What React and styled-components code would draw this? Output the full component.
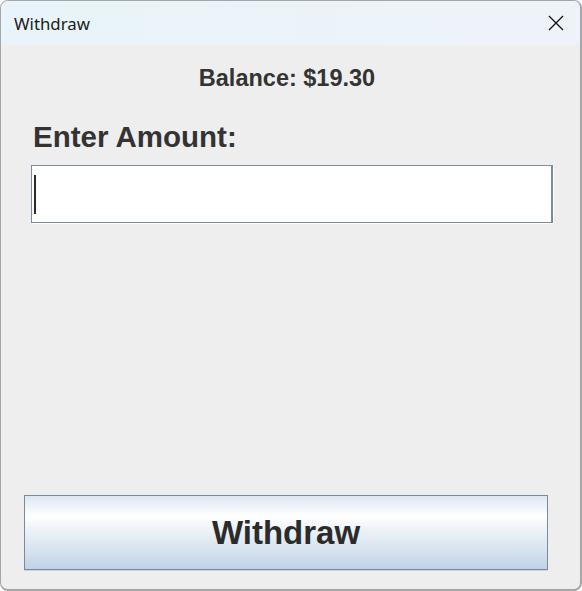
import React from "react";
import styled, { createGlobalStyle } from "styled-components";

const Global = createGlobalStyle`
  html, body {
    margin: 0;
    padding: 0;
    background: #ffffff;
  }
`;

const Window = styled.div`
  box-sizing: border-box;
  width: 582px;
  height: 591px;
  display: flex;
  flex-direction: column;
  border: 1px solid #a6a6a6;
  border-right-width: 2px;
  border-bottom-width: 2px;
  border-radius: 8px;
  overflow: hidden;
  background: #eeeeee;
`;

const TitleBar = styled.div`
  height: 44px;
  flex-shrink: 0;
  display: flex;
  align-items: center;
  justify-content: space-between;
  padding: 0 0 0 13px;
  background: linear-gradient(to right, #e8f4f9, #eef3f9);
  font-family: "Noto Sans", "Open Sans", sans-serif;
  font-size: 16.8px;
  color: #1a1a1a;
`;

const CloseButton = styled.div`
  width: 46px;
  height: 42px;
  display: flex;
  align-items: center;
  justify-content: center;
  margin-right: 1px;
`;

const Content = styled.div`
  flex: 1;
  display: flex;
  flex-direction: column;
  padding: 19px 26px 19px 23px;
  font-family: "Liberation Sans", Arial, sans-serif;
  color: #333333;
`;

const Balance = styled.div`
  text-align: center;
  font-weight: bold;
  font-size: 23.5px;
  line-height: 28px;
  margin-right: 4px;
`;

const Label = styled.div`
  font-weight: bold;
  font-size: 29.5px;
  line-height: 34px;
  margin: 28px 0 11px 9px;
`;

const Field = styled.div`
  box-sizing: border-box;
  height: 58px;
  margin-left: 7px;
  margin-right: 1px;
  display: flex;
  align-items: center;
  padding-left: 2px;
  background: #ffffff;
  border: 1px solid #7d8c9b;
  border-right-width: 2px;
  box-shadow: 1px 1px 0 #ffffff;
`;

const Caret = styled.span`
  width: 2px;
  height: 39px;
  background: #2a2a2a;
`;

const Spacer = styled.div`
  flex: 1;
`;

const Button = styled.div`
  box-sizing: border-box;
  height: 75px;
  margin-left: 0;
  margin-right: 6px;
  display: flex;
  align-items: center;
  justify-content: center;
  border: 1px solid #7a8a9c;
  box-shadow: 0 1px 0 #c9d6e3;
  background: linear-gradient(
    to bottom,
    #dce7f2 0%,
    #ffffff 28%,
    #eef3f8 45%,
    #d6e2ee 75%,
    #c0d3e6 100%
  );
  font-weight: bold;
  font-size: 33px;
  color: #2b2b2b;
`;

export default function App() {
  return (
    <>
      <Global />
      <Window>
        <TitleBar>
          <span>Withdraw</span>
          <CloseButton>
            <svg width="16" height="16" viewBox="0 0 16 16">
              <path d="M1 1 L15 15 M15 1 L1 15" stroke="#111" strokeWidth="1.3" fill="none" />
            </svg>
          </CloseButton>
        </TitleBar>
        <Content>
          <Balance>Balance: $19.30</Balance>
          <Label>Enter Amount:</Label>
          <Field>
            <Caret />
          </Field>
          <Spacer />
          <Button>Withdraw</Button>
        </Content>
      </Window>
    </>
  );
}
